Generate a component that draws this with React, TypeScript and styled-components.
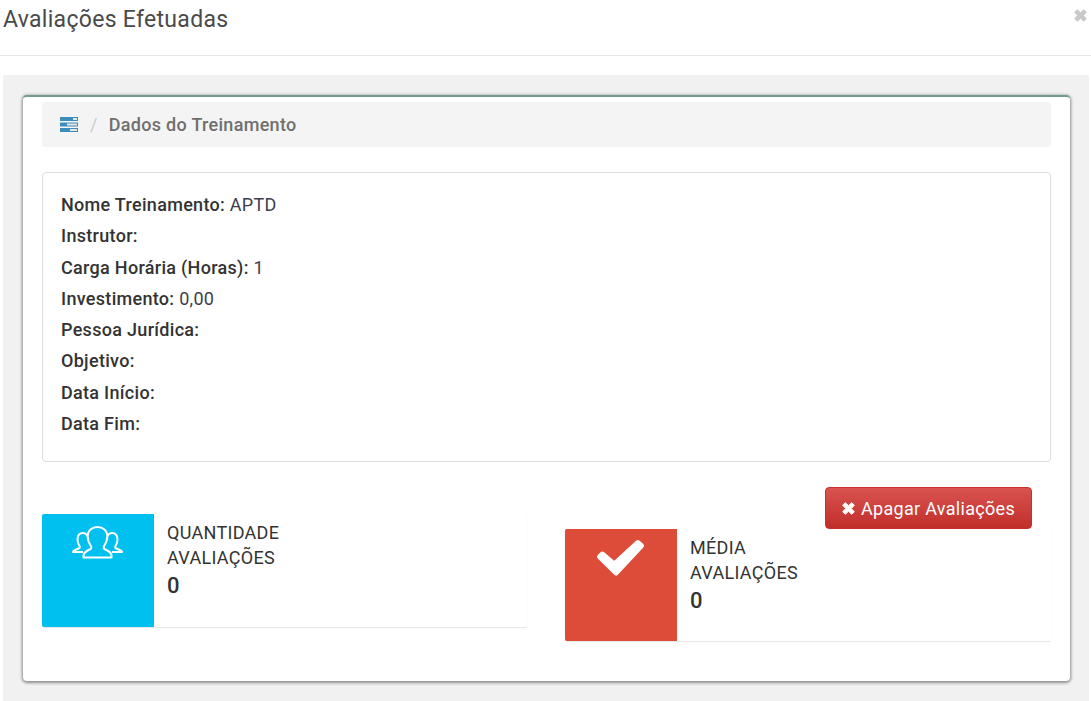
import React from "react"
import styled, { createGlobalStyle } from "styled-components"

const GlobalStyle = createGlobalStyle`
    html, body {
        margin: 0;
        padding: 0;
        background: #fff;
        font-family: Roboto, "Liberation Sans", sans-serif;
        letter-spacing: 0.3px;
        color: #333;
        overflow: hidden;
    }
`

const Modal = styled.div`
    width: 1091px;
    height: 701px;
    display: flex;
    flex-direction: column;
    background: #fff;
`

const Header = styled.header`
    height: 55px;
    flex: none;
    display: flex;
    justify-content: space-between;
    align-items: flex-start;
    padding: 0 3px;
    border-bottom: 1px solid #e5e5e5;
`

const Title = styled.h4`
    margin: 6px 0 0;
    font-size: 23px;
    line-height: 28px;
    font-weight: 400;
    color: #4a4a4a;
`

const Close = styled.span`
    display: flex;
    margin: 9px 1px 0 0;
`

const Body = styled.main`
    flex: 1;
    margin: 19px 2px 0 3px;
    padding: 20px 19px 20px 20px;
    background: #f1f1f1;
    display: flex;
`

const Card = styled.section`
    flex: 1;
    box-sizing: border-box;
    padding: 5px 19px 0;
    background: #fff;
    border-top: 2px solid #6f9f8a;
    border-radius: 4px;
    box-shadow: 0 1px 3px 1px rgba(0, 0, 0, 0.42);
`

const Breadcrumb = styled.nav`
    height: 45px;
    display: flex;
    align-items: center;
    padding-left: 18px;
    background: #f4f4f4;
    border-radius: 4px;
    font-size: 18px;
`

const Separator = styled.span`
    margin: 0 11px 0 12px;
    color: #ccc;
`

const Crumb = styled.strong`
    font-weight: 500;
    color: #6f6f6f;
`

const Panel = styled.div`
    box-sizing: border-box;
    height: 290px;
    margin-top: 25px;
    padding: 16px 18px;
    border: 1px solid #ddd;
    border-radius: 4px;
`

const Row = styled.div`
    height: 31.25px;
    line-height: 31.25px;
    font-size: 18px;
    color: #3d3d4d;
`

const Label = styled.b`
    font-weight: 500;
    color: #333;
`

const Stats = styled.div`
    display: grid;
    grid-template-columns: 485px 486px;
    justify-content: space-between;
    margin-top: 25px;
`

const LeftColumn = styled.div`
    padding-top: 27px;
`

const RightColumn = styled.div`
    display: flex;
    flex-direction: column;
`

const DeleteButton = styled.button`
    align-self: flex-end;
    box-sizing: border-box;
    width: 207px;
    height: 42px;
    margin-right: 19px;
    display: flex;
    align-items: center;
    justify-content: center;
    gap: 6px;
    border: 1px solid #c9302c;
    border-radius: 4px;
    background: linear-gradient(to bottom, #d9534f, #c12e2a);
    color: #fff;
    font-family: inherit;
    font-size: 18px;
    letter-spacing: 0.3px;
`

const InfoBox = styled.div<{ $height: number }>`
    display: flex;
    height: ${({ $height }) => $height}px;
    background: #fff;
    border-radius: 2px;
    box-shadow: 0 1px 1px rgba(0, 0, 0, 0.1), 0 0 1px rgba(0, 0, 0, 0.06);
`

const IconBox = styled.div<{ $color: string }>`
    flex: none;
    width: 112px;
    display: flex;
    justify-content: center;
    align-items: flex-start;
    background: ${({ $color }) => $color};
    border-radius: 2px 0 0 2px;
    color: #fff;
`

const InfoContent = styled.div`
    padding: 6px 13px;
`

const InfoText = styled.div`
    font-size: 18px;
    line-height: 25px;
    color: #333;
    text-transform: uppercase;
`

const InfoNumber = styled.div`
    font-size: 22px;
    line-height: 32px;
    font-weight: 500;
    color: #333;
`

const ServerIcon = () => (
    <svg width="18" height="15" viewBox="0 0 18 15" style={{ flex: "none" }}>
        <rect x="0" y="0" width="18" height="4" fill="#3c8dbc" />
        <rect x="0" y="5.5" width="18" height="4" fill="#3c8dbc" />
        <rect x="0" y="11" width="18" height="4" fill="#3c8dbc" />
        <rect x="13" y="1" width="4" height="2" fill="#e6e6e6" />
        <rect x="7" y="6.5" width="10" height="2" fill="#e6e6e6" />
        <rect x="10" y="12" width="7" height="2" fill="#e6e6e6" />
    </svg>
)

const CrossIcon: React.FC<{ size: number; color: string }> = ({ size, color }) => (
    <svg width={size} height={size} viewBox="0 0 13 13" style={{ flex: "none" }}>
        <path
            d="M.7 3.2 L3.2 .7 L6.5 3.7 L9.8 .7 L12.3 3.2 L9.3 6.5 L12.3 9.8 L9.8 12.3 L6.5 9.3 L3.2 12.3 L.7 9.8 L3.7 6.5 Z"
            fill={color}
            stroke={color}
            strokeWidth="1"
            strokeLinejoin="round"
        />
    </svg>
)

const CheckIcon = () => (
    <svg width="56" height="40" viewBox="0 0 56 40" style={{ marginTop: 9 }}>
        <path
            d="M6.5 18.700 L9.300 16 L21.300 26.200 L44.700 4.500 L48.500 7.700 L23 35 Z"
            fill="#fff"
            stroke="#fff"
            strokeWidth="5"
            strokeLinejoin="round"
        />
    </svg>
)

const UsersIcon = () => (
    <svg
        width="52"
        height="33"
        viewBox="0 0 52 33"
        fill="none"
        stroke="#fff"
        strokeWidth="2"
        strokeLinejoin="round"
        style={{ marginTop: 12 }}
    >
        <path d="M11.500 31.500 v-2 c0-3 3-4.500 7-6.500 c1.500-.8 1-2 .2-3.500 c-1.500-2-3-5-3-9.500 C15.700 4.500 20 1 25.500 1 S35.300 4.500 35.300 10 c0 4.500-1.500 7.500-3 9.500 c-.8 1.500-1.300 2.700 .2 3.500 c4 2 7 3.500 7 6.500 v2 z" />
        <path d="M15.500 10 c-1-2-2.500-3-4.500-3 c-3.500 0-5.500 2.500-5.500 6.500 c0 3 1 5 2 6.500 c.5 1 .2 2-.8 2.500 c-2 1-5.700 2-5.700 3.500 h10" />
        <path
            transform="matrix(-1 0 0 1 51 0)"
            d="M15.500 10 c-1-2-2.500-3-4.500-3 c-3.500 0-5.500 2.500-5.500 6.500 c0 3 1 5 2 6.500 c.5 1 .2 2-.8 2.500 c-2 1-5.700 2-5.700 3.500 h10"
        />
    </svg>
)

const App: React.FC = () => {
    const rows = [
        { label: "Nome Treinamento:", value: "APTD" },
        { label: "Instrutor:", value: "" },
        { label: "Carga Horária (Horas):", value: "1" },
        { label: "Investimento:", value: "0,00" },
        { label: "Pessoa Jurídica:", value: "" },
        { label: "Objetivo:", value: "" },
        { label: "Data Início:", value: "" },
        { label: "Data Fim:", value: "" },
    ]

    return (
        <Modal>
            <GlobalStyle />
            <Header>
                <Title>Avaliações Efetuadas</Title>
                <Close>
                    <CrossIcon size={13} color="#c9c9c9" />
                </Close>
            </Header>
            <Body>
                <Card>
                    <Breadcrumb>
                        <ServerIcon />
                        <Separator>/</Separator>
                        <Crumb>Dados do Treinamento</Crumb>
                    </Breadcrumb>
                    <Panel>
                        {rows.map((row) => (
                            <Row key={row.label}>
                                <Label>{row.label}</Label> {row.value}
                            </Row>
                        ))}
                    </Panel>
                    <Stats>
                        <LeftColumn>
                            <InfoBox $height={113}>
                                <IconBox $color="#00c0ef">
                                    <UsersIcon />
                                </IconBox>
                                <InfoContent>
                                    <InfoText>Quantidade</InfoText>
                                    <InfoText>Avaliações</InfoText>
                                    <InfoNumber>0</InfoNumber>
                                </InfoContent>
                            </InfoBox>
                        </LeftColumn>
                        <RightColumn>
                            <DeleteButton>
                                <CrossIcon size={13} color="#fff" />
                                Apagar Avaliações
                            </DeleteButton>
                            <InfoBox $height={112}>
                                <IconBox $color="#dd4b39">
                                    <CheckIcon />
                                </IconBox>
                                <InfoContent>
                                    <InfoText>Média</InfoText>
                                    <InfoText>Avaliações</InfoText>
                                    <InfoNumber>0</InfoNumber>
                                </InfoContent>
                            </InfoBox>
                        </RightColumn>
                    </Stats>
                </Card>
            </Body>
        </Modal>
    )
}

export default App
